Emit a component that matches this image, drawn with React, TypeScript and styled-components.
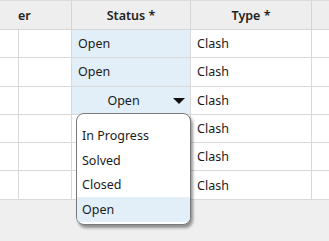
import React from "react";
import styled, { createGlobalStyle } from "styled-components";

const GlobalStyle = createGlobalStyle`
  html, body {
    margin: 0;
    padding: 0;
    background: #efefef;
  }
  body {
    font-family: "Noto Sans", "Open Sans", sans-serif;
    font-size: 12.5px;
    color: #1b1b1b;
  }
`;

const Grid = styled.div`
  position: relative;
  width: 329px;
  height: 241px;
  overflow: hidden;
  background: #efefef;
`;

const HeaderRow = styled.div`
  display: flex;
  height: 30px;
  box-sizing: border-box;
  border-top: 1px solid #dcdcdc;
  border-bottom: 1px solid #d6d6d6;
  background: #eeeeee;
`;

const HeaderCell = styled.div<{ w: number; align?: string; pl?: number }>`
  width: ${({ w }) => w}px;
  flex: none;
  box-sizing: border-box;
  border-right: 1px solid #d6d6d6;
  display: flex;
  align-items: center;
  justify-content: ${({ align }) => align || "center"};
  padding-left: ${({ pl }) => pl || 0}px;
  font-weight: 600;
  color: #222;
  &:last-child {
    border-right: none;
  }
`;

const Row = styled.div`
  display: flex;
  height: 28.3px;
  box-sizing: border-box;
  border-bottom: 1px solid #d9d9d9;
  background: #ffffff;
`;

const Cell = styled.div<{ w: number; selected?: boolean }>`
  width: ${({ w }) => w}px;
  flex: none;
  box-sizing: border-box;
  border-right: 1px solid #d9d9d9;
  display: flex;
  align-items: center;
  padding-left: 6px;
  background: ${({ selected }) => (selected ? "#e2eff8" : "transparent")};
  &:last-child {
    border-right: none;
  }
`;

const ComboCell = styled(Cell)`
  padding-left: 0;
  padding-right: 5px;
  justify-content: space-between;
`;

const ComboText = styled.span`
  flex: 1;
  text-align: center;
  padding-left: 2px;
`;

const Arrow = styled.svg`
  width: 12px;
  height: 6px;
  margin-top: 2px;
`;

const Popup = styled.div`
  position: absolute;
  left: 76px;
  top: 113px;
  width: 115px;
  box-sizing: border-box;
  padding: 9px 0 2px;
  background: #ffffff;
  border: 1px solid #7a7a7a;
  border-radius: 8px;
  box-shadow: 2px 3px 3px rgba(0, 0, 0, 0.4);
  overflow: hidden;
`;

const Option = styled.div<{ active?: boolean }>`
  height: 24.7px;
  display: flex;
  align-items: center;
  padding-left: 5px;
  background: ${({ active }) => (active ? "#e2eff8" : "transparent")};
`;

const widths = [19, 53, 119, 121, 17];

const rows = [0, 1, 2, 3, 4, 5];

export default function App() {
  return (
    <>
      <GlobalStyle />
      <Grid>
        <HeaderRow>
          <HeaderCell w={72} align="flex-start" pl={18}>
            er
          </HeaderCell>
          <HeaderCell w={119}>Status *</HeaderCell>
          <HeaderCell w={121}>Type *</HeaderCell>
          <HeaderCell w={17} />
        </HeaderRow>
        {rows.map((i) => (
          <Row key={i}>
            <Cell w={widths[0]} />
            <Cell w={widths[1]} />
            {i < 3 ? (
              i === 2 ? (
                <ComboCell w={widths[2]} selected>
                  <ComboText>Open</ComboText>
                  <Arrow viewBox="0 0 12 6">
                    <path d="M0 0 L12 0 L6 6 Z" fill="#111" />
                  </Arrow>
                </ComboCell>
              ) : (
                <Cell w={widths[2]} selected>
                  Open
                </Cell>
              )
            ) : (
              <Cell w={widths[2]} />
            )}
            <Cell w={widths[3]}>Clash</Cell>
            <Cell w={widths[4]} />
          </Row>
        ))}
        <Popup>
          <Option>In Progress</Option>
          <Option>Solved</Option>
          <Option>Closed</Option>
          <Option active>Open</Option>
        </Popup>
      </Grid>
    </>
  );
}
